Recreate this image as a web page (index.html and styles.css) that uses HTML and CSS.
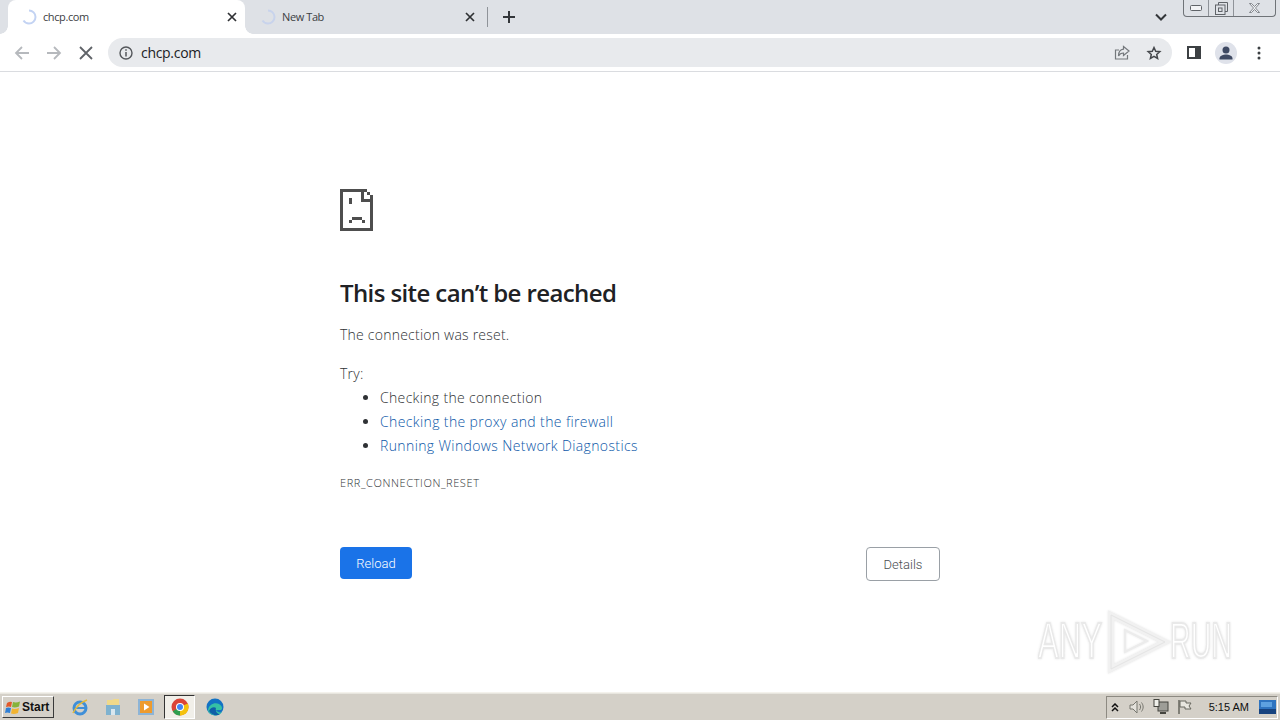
FILE: index.html
```html
<!DOCTYPE html>
<html lang="en">
<head>
  <meta charset="UTF-8">
  <meta name="viewport" content="width=device-width, initial-scale=1.0">
  <title>chcp.com</title>
  <link rel="stylesheet" href="styles.css">
</head>
<body>
  <div class="browser">
    <div class="tabstrip">
      <div class="tab tab-active">
        <svg class="spinner" viewBox="0 0 16 16"><path d="M8 1.500a6.500 6.500 0 0 1 0 13 6.500 6.500 0 0 1-5.500-3" fill="none" stroke="#c3d3f3" stroke-width="2"/></svg>
        <span class="tab-title">chcp.com</span>
        <svg class="tab-close" viewBox="0 0 10 10"><path d="M1 1l8 8M9 1l-8 8" stroke="#2f3134" stroke-width="1.700"/></svg>
      </div>
      <div class="tab">
        <svg class="spinner" viewBox="0 0 16 16"><path d="M8 1.500a6.500 6.500 0 0 1 0 13 6.500 6.500 0 0 1-5.500-3" fill="none" stroke="#c8d3ec" stroke-width="2"/></svg>
        <span class="tab-title">New Tab</span>
        <svg class="tab-close" viewBox="0 0 10 10"><path d="M1 1l8 8M9 1l-8 8" stroke="#2f3134" stroke-width="1.700"/></svg>
      </div>
      <div class="tab-sep"></div>
      <svg class="new-tab" viewBox="0 0 12 12"><path d="M6 0v12M0 6h12" stroke="#33363a" stroke-width="2"/></svg>
      <svg class="tab-list" viewBox="0 0 12 8"><path d="M1 1.500l5 5 5-5" fill="none" stroke="#33363a" stroke-width="2"/></svg>
      <div class="win-controls">
        <div class="win-btn win-min"><svg viewBox="0 0 12 6" width="12" height="6"><rect x="0.500" y="0.500" width="11" height="5" rx="1" fill="#f2f3f5" stroke="#5f6368"/></svg></div>
        <div class="win-btn win-max"><svg viewBox="0 0 13 13" width="13" height="13"><path d="M3.500 3V.500h9v9H10" fill="none" stroke="#5f6368"/><rect x="0.500" y="3" width="9.500" height="9.500" fill="none" stroke="#5f6368"/><rect x="3.500" y="6" width="3.500" height="3.500" fill="none" stroke="#5f6368"/></svg></div>
        <div class="win-btn win-close"><svg viewBox="0 0 13 10" width="13" height="10"><path d="M1.500 .500h2l3 3 3-3h2l-4 4.500 4 4.500h-2l-3-3-3 3h-2l4-4.500z" fill="#eef0f3" stroke="#6b6f75" stroke-width=".8"/></svg></div>
      </div>
    </div>

    <div class="toolbar">
      <svg class="nav-icon" viewBox="0 0 16 16"><path d="M15 8H2M8 2L2 8l6 6" fill="none" stroke="#b6b9bd" stroke-width="1.800"/></svg>
      <svg class="nav-icon" viewBox="0 0 16 16"><path d="M1 8h13M8 2l6 6-6 6" fill="none" stroke="#b6b9bd" stroke-width="1.800"/></svg>
      <svg class="nav-icon" viewBox="0 0 16 16"><path d="M2 2l12 12M14 2L2 14" stroke="#5f6368" stroke-width="1.800"/></svg>
      <div class="omnibox">
        <svg class="info-icon" viewBox="0 0 14 14"><circle cx="7" cy="7" r="6" fill="none" stroke="#54575b" stroke-width="1.400"/><path d="M7 6v4.500M7 3.300v1.500" stroke="#54575b" stroke-width="1.500"/></svg>
        <span class="url">chcp.com</span>
        <svg class="omni-icon" viewBox="0 0 16 16"><path d="M13.500 10v4h-12V5H5" fill="none" stroke="#74787c" stroke-width="1.200"/><path d="M9.500 1.500L15 6l-5.500 4.500V8C7 8 5.500 9 4.500 11c0-4 2-6.500 5-6.800z" fill="none" stroke="#74787c" stroke-width="1.200"/></svg>
        <svg class="omni-icon" viewBox="0 0 16 16"><path d="M8 2.500l1.700 3.800 4.100.4-3.100 2.700.9 4.100L8 11.400l-3.600 2.100.9-4.100-3.100-2.700 4.100-.4z" fill="none" stroke="#45484c" stroke-width="1.500"/></svg>
      </div>
      <svg class="panel-icon" viewBox="0 0 14 13"><rect x="1" y="1" width="12" height="11" fill="none" stroke="#3c4043" stroke-width="2"/><rect x="8" y="1" width="5" height="11" fill="#3c4043"/></svg>
      <div class="avatar"><svg viewBox="0 0 22 22" width="22" height="22"><circle cx="11" cy="8" r="3.500" fill="#3f4a63"/><path d="M4.500 16.500c0-3 4-4 6.500-4s6.500 1 6.500 4v1h-13z" fill="#3f4a63"/></svg></div>
      <svg class="menu-icon" viewBox="0 0 4 14"><circle cx="2" cy="2" r="1.500" fill="#3c4043"/><circle cx="2" cy="7" r="1.500" fill="#3c4043"/><circle cx="2" cy="12" r="1.500" fill="#3c4043"/></svg>
    </div>

    <main class="page">
      <div class="error-box">
        <svg class="sad-icon" viewBox="0 0 33 42" shape-rendering="crispEdges" fill="#4e4e4e">
          <rect x="0" y="0" width="24" height="3"/>
          <rect x="0" y="0" width="3" height="42"/>
          <rect x="0" y="39" width="33" height="3"/>
          <rect x="30" y="10" width="3" height="32"/>
          <rect x="21" y="0" width="3" height="13"/>
          <rect x="21" y="10" width="12" height="3"/>
          <rect x="24" y="0" width="3" height="3"/>
          <rect x="27" y="3" width="3" height="3"/>
          <rect x="30" y="6" width="3" height="4"/>
          <rect x="9" y="9" width="3" height="6"/>
          <rect x="12" y="28" width="10" height="3"/>
          <rect x="9" y="31" width="3" height="3"/>
          <rect x="22" y="31" width="3" height="3"/>
        </svg>
        <h1>This site can’t be reached</h1>
        <p class="reason">The connection was reset.</p>
        <p class="try">Try:</p>
        <ul class="suggestions">
          <li>Checking the connection</li>
          <li><a href="#">Checking the proxy and the firewall</a></li>
          <li><a href="#">Running Windows Network Diagnostics</a></li>
        </ul>
        <div class="error-code">ERR_CONNECTION_RESET</div>
        <div class="buttons">
          <button class="btn-reload">Reload</button>
          <button class="btn-details">Details</button>
        </div>
      </div>
      <svg class="watermark" viewBox="0 0 240 68" width="240" height="68">
        <text x="0" y="50" textLength="64" lengthAdjust="spacingAndGlyphs">ANY</text>
        <path d="M73 7v54l54-27z" fill="none" stroke="#f1f1f1" stroke-width="6"/>
        <path d="M73 7v54l54-27z" fill="none" stroke="#e4e4e4" stroke-width="1"/>
        <path d="M87 22v22l22-11z" fill="none" stroke="#ececec" stroke-width="2"/>
        <text x="132" y="50" textLength="62" lengthAdjust="spacingAndGlyphs">RUN</text>
      </svg>
    </main>

    <footer class="taskbar">
      <div class="start-btn">
        <svg viewBox="0 0 16 15" width="16" height="15"><path d="M2 3q3-2 5-1l-1 5q-2-1-5 0z" fill="#e2592b"/><path d="M8 2q3 1 7-.5l-1 5q-4 1.500-7 .5z" fill="#86b33a"/><path d="M1 8q2-1 5 0l-1 5q-3-1-5 0z" fill="#2f7fd6"/><path d="M7 8.500q3 1 7-.5l-1 5q-4 1.500-7 .5z" fill="#f2b431"/></svg>
        <span>Start</span>
      </div>
      <div class="quick-launch">
        <svg class="tb-icon" viewBox="0 0 18 18"><circle cx="9" cy="10" r="6" fill="none" stroke="#3f8fd8" stroke-width="3"/><path d="M4 10h10" stroke="#3f8fd8" stroke-width="2"/><path d="M2 15c3-6 8-11 14-13" fill="none" stroke="#e4b93a" stroke-width="1.500"/></svg>
        <svg class="tb-icon" viewBox="0 0 18 18"><path d="M3 2h5l2-1h5v14H3z" fill="#f0d98a"/><rect x="2" y="7" width="14" height="10" fill="#7fb2cf"/><rect x="7" y="11" width="4" height="6" fill="#d9e7ef"/></svg>
        <svg class="tb-icon" viewBox="0 0 18 18"><rect x="1" y="1" width="16" height="16" fill="#8db4d6"/><rect x="3" y="3" width="12" height="12" fill="#ee9b2e"/><path d="M7 5.500l5.500 3.500L7 12.500z" fill="#fff"/></svg>
        <div class="tb-pressed">
          <svg viewBox="0 0 18 18" width="18" height="18"><circle cx="9" cy="9" r="8.500" fill="#db4437"/><path d="M9 9L1.700 13.200A8.500 8.500 0 0 0 9 17.500z" fill="#2e9e4f"/><path d="M9 9l7.800-3.500A8.500 8.500 0 0 1 9 17.500z" fill="#f4c20d"/><circle cx="9" cy="9" r="4" fill="#fff"/><circle cx="9" cy="9" r="3" fill="#4285f4"/></svg>
        </div>
        <svg class="tb-icon" viewBox="0 0 18 18"><circle cx="9" cy="9" r="8.500" fill="#1272c4"/><path d="M2 12C3 6 9 4 13 6c3 1.500 4 5 2 6h-5c1 2 4 3 6 2-2 3-6 4-9 3-3-1-5-3-5-5z" fill="#35c1a5"/><path d="M3 13c1-3 5-5 7-3-1 3 1 6 4 6.500-4 2-9 0-11-3.500z" fill="#0f5fa8"/></svg>
      </div>
      <div class="tray">
        <span class="tray-up">
          <svg viewBox="0 0 8 9" width="8" height="9"><path d="M1 4l3-3 3 3M1 8l3-3 3 3" fill="none" stroke="#111" stroke-width="1.500"/></svg>
        </span>
        <svg class="tray-icon" viewBox="0 0 16 16"><path d="M1 6h3l4-4v12l-4-4H1z" fill="#e4e2dc" stroke="#77776f"/><path d="M10.500 5c1.500 2 1.500 4 0 6M12.500 3.500c2.200 3 2.200 6 0 9" fill="none" stroke="#77776f"/></svg>
        <svg class="tray-icon" viewBox="0 0 16 16"><rect x="5" y="3" width="10" height="9" fill="#9d9d97" stroke="#45453f"/><rect x="1" y="0.500" width="5" height="7" fill="#f0f0ea" stroke="#45453f"/><path d="M7 14h6" stroke="#45453f" stroke-width="2"/></svg>
        <svg class="tray-icon" viewBox="0 0 16 16"><path d="M2 1v14" stroke="#66665e" stroke-width="1.500"/><path d="M3 2h6v2h5l-2 3 2 3H8V8H3z" fill="#e8e6df" stroke="#66665e"/></svg>
        <span class="clock">5:15 AM</span>
        <svg class="show-desktop" viewBox="0 0 17 14"><rect width="17" height="14" fill="#2f74c0"/><rect y="9" width="17" height="5" fill="#17437f"/><rect x="2" y="2" width="11" height="5" fill="#5ea1e0"/></svg>
      </div>
    </footer>
  </div>
</body>
</html>
```

FILE: styles.css
```css
:root {
  --strip-bg: #dee1e6;
  --icon: #5f6368;
  --text: #202124;
  --body-text: #2f3235;
  --link: #0b57a8;
  --blue: #1a73e8;
  --taskbar: #d4d0c8;
}

* {
  box-sizing: border-box;
}

html, body {
  margin: 0;
  height: 100%;
  overflow: hidden;
}

body {
  font-family: "Open Sans", "Noto Sans", Arial, sans-serif;
  background-color: #fff;
  color: var(--text);
}

.browser {
  display: flex;
  flex-direction: column;
  height: 720px;
}

/* tabs */
.tabstrip {
  display: flex;
  align-items: flex-end;
  height: 34px;
  padding-left: 8px;
  background-color: var(--strip-bg);
}

.tab {
  display: flex;
  align-items: center;
  width: 237px;
  height: 34px;
  padding: 0 7px 0 13px;
  border-radius: 8px 8px 0 0;
}

.tab-active {
  position: relative;
  background-color: #fff;
}

/* little curves where the active tab meets the toolbar */
.tab-active::before, .tab-active::after {
  content: "";
  position: absolute;
  bottom: 0;
  width: 8px;
  height: 8px;
}

.tab-active::before {
  left: -8px;
  background: radial-gradient(circle at 0 0, var(--strip-bg) 7.5px, #fff 8px);
}

.tab-active::after {
  right: -8px;
  background: radial-gradient(circle at 100% 0, var(--strip-bg) 7.5px, #fff 8px);
}

.tab + .tab {
  width: 238px;
  padding-left: 15px;
}

.spinner {
  width: 16px;
  height: 16px;
  flex-shrink: 0;
}

.tab-title {
  flex: 1;
  margin: 0 0 1px 6px;
  font-size: 11px;
  letter-spacing: -0.4px;
  color: #3c4043;
}

.tab-close {
  width: 10px;
  height: 10px;
  margin-right: 1px;
}

.tab-sep {
  width: 1px;
  height: 20px;
  margin: 0 0 7px 4px;
  background-color: #8f9399;
}

.new-tab {
  width: 12px;
  height: 12px;
  margin: 0 0 11px 15px;
}

.tab-list {
  width: 12px;
  height: 8px;
  margin: 0 0 13px auto;
}

.win-controls {
  display: flex;
  align-self: flex-start;
  width: 93px;
  height: 17px;
  margin: 0 4px 0 16px;
  border: 1px solid #6f7378;
  border-top: none;
  border-radius: 0 0 4px 4px;
}

.win-btn {
  display: flex;
  align-items: center;
  justify-content: center;
  border-right: 1px solid #8f9399;
}

.win-min {
  width: 25px;
}

.win-max {
  width: 25px;
}

.win-close {
  flex: 1;
  border-right: none;
}

/* toolbar */
.toolbar {
  display: flex;
  align-items: center;
  height: 38px;
  padding: 0 0 0 14px;
  border-bottom: 1px solid #dadce0;
  background-color: #fff;
}

.nav-icon {
  width: 16px;
  height: 16px;
  margin-right: 16px;
}

.omnibox {
  display: flex;
  align-items: center;
  width: 1064px;
  height: 29px;
  margin-left: -2px;
  padding: 0 10px 0 11px;
  border-radius: 15px;
  background-color: #e8eaed;
}

.info-icon {
  width: 14px;
  height: 14px;
}

.url {
  flex: 1;
  margin-left: 8px;
  font-size: 14px;
  letter-spacing: -0.3px;
  color: #202124;
}

.omni-icon {
  width: 16px;
  height: 16px;
  margin-left: 16px;
}

.panel-icon {
  width: 14px;
  height: 13px;
  margin-left: 15px;
}

.avatar {
  display: flex;
  align-items: center;
  justify-content: center;
  width: 22px;
  height: 22px;
  margin-left: 14px;
  border-radius: 50%;
  background-color: #dfe2ea;
}

.menu-icon {
  width: 4px;
  height: 14px;
  margin-left: 20px;
}

/* error page */
.page {
  position: relative;
  flex: 1;
  padding: 117px 0 0 340px;
}

.error-box {
  width: 600px;
}

.sad-icon {
  display: block;
  width: 33px;
  height: 42px;
}

h1 {
  margin: 45px 0 0;
  font-size: 24px;
  font-weight: 600;
  line-height: 34px;
  letter-spacing: -0.6px;
  color: var(--text);
}

.reason, .try {
  margin: 0;
  font-size: 14px;
  font-weight: 300;
  line-height: 24px;
  letter-spacing: 0.23px;
  color: var(--body-text);
}

.reason {
  margin-top: 13px;
}

.try {
  margin-top: 15px;
}

.suggestions {
  margin: 0;
  padding-left: 40px;
  font-size: 14px;
  font-weight: 300;
  line-height: 24px;
  letter-spacing: 0.33px;
  color: var(--body-text);
}

.suggestions a {
  letter-spacing: 0.38px;
  color: var(--link);
  text-decoration: none;
}

.error-code {
  margin-top: 18px;
  font-size: 11px;
  font-weight: 300;
  line-height: 14px;
  letter-spacing: 0.6px;
  color: var(--body-text);
}

.buttons {
  display: flex;
  justify-content: space-between;
  align-items: flex-start;
  margin-top: 57px;
}

.buttons button {
  font-family: Roboto, Arial, sans-serif;
  font-size: 13px;
  font-weight: 300;
  border-radius: 4px;
}

.btn-reload {
  width: 72px;
  height: 32px;
  border: none;
  background-color: var(--blue);
  color: #fff;
}

.btn-details {
  width: 74px;
  height: 34px;
  border: 1px solid #9aa0a6;
  background-color: #fff;
  color: #4a4d51;
}

.watermark {
  position: absolute;
  right: 2px;
  bottom: 16px;
  filter: drop-shadow(0 0 1px #e6e6e6);
}

.watermark text {
  font-family: "Liberation Sans", Arial, sans-serif;
  font-size: 50px;
  fill: #fff;
  stroke: #e9e9e9;
  stroke-width: 2;
}

/* windows taskbar */
.taskbar {
  display: flex;
  align-items: center;
  height: 28px;
  padding: 1px 2px 0;
  border-top: 1px solid #f4f2ec;
  background-color: var(--taskbar);
  box-shadow: inset 0 1px 0 #e8e6df;
  font-family: "Liberation Sans", Arial, sans-serif;
}

.start-btn {
  display: flex;
  align-items: center;
  gap: 1px;
  width: 52px;
  height: 22px;
  padding-left: 2px;
  border: 1px solid;
  border-color: #fff #3a3a3a #3a3a3a #fff;
  font-size: 12px;
  font-weight: 700;
  color: #111;
}

.quick-launch {
  display: flex;
  align-items: center;
  margin-left: 17px;
}

.tb-icon {
  width: 18px;
  height: 18px;
  margin-right: 15px;
}

.tb-pressed {
  display: flex;
  align-items: center;
  justify-content: center;
  width: 31px;
  height: 24px;
  margin: 0 11px 0 -6px;
  border: 1px solid;
  border-color: #333 #fff #fff #333;
  background-color: #f1efe9;
}

.tray {
  display: flex;
  align-items: center;
  height: 23px;
  margin-left: auto;
  padding: 0 1px 0 4px;
  border: 1px solid;
  border-color: #8d8a82 #fff #fff #8d8a82;
}

.tray-up {
  display: flex;
  width: 8px;
  margin-right: 10px;
}

.tray-icon {
  width: 16px;
  height: 16px;
  margin-right: 8px;
}

.clock {
  margin: 0 10px 0 8px;
  font-size: 11px;
  color: #111;
}

.show-desktop {
  width: 17px;
  height: 14px;
}
```
